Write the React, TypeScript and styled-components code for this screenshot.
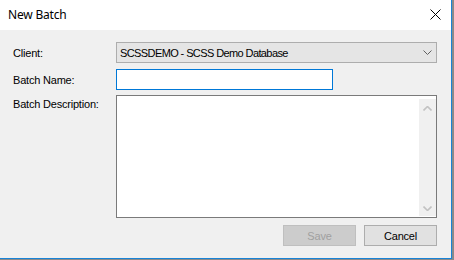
import React from "react";
import styled, { createGlobalStyle } from "styled-components";

const Global = createGlobalStyle`
  html, body { margin: 0; padding: 0; }
  body {
    width: 454px;
    height: 260px;
    overflow: hidden;
    background: #8a8a8a;
    font-family: "Liberation Sans", Arial, sans-serif;
  }
`;

const Window = styled.div`
  width: 451px;
  height: 258px;
  border-right: 1px solid #1883d7;
  border-bottom: 1px solid #1883d7;
  display: flex;
  flex-direction: column;
  background: #f0f0f0;
`;

const TitleBar = styled.div`
  height: 30px;
  flex: none;
  background: #ffffff;
  display: flex;
  align-items: center;
  justify-content: space-between;
  padding: 0 10px 0 8px;
`;

const Title = styled.span`
  font-family: "Noto Sans", "Liberation Sans", sans-serif;
  font-size: 12px;
  letter-spacing: -0.2px;
  color: #000;
  margin-top: -1px;
`;

const CloseButton = styled.span`
  display: flex;
  width: 11px;
  height: 11px;
  margin-top: -2px;
`;

const Body = styled.div`
  flex: 1;
  display: flex;
  flex-direction: column;
  padding: 12px 14px 0 13px;
  letter-spacing: -0.2px;
`;

const Form = styled.div`
  display: grid;
  grid-template-columns: 103px 321px;
  row-gap: 6px;
`;

const Label = styled.label<{ $top?: boolean }>`
  font-size: 11px;
  color: #000;
  display: flex;
  align-items: ${(p) => (p.$top ? "flex-start" : "center")};
  padding-top: ${(p) => (p.$top ? "3px" : "0")};
  margin-top: ${(p) => (p.$top ? "-1px" : "0")};
`;

const Combo = styled.div`
  box-sizing: border-box;
  height: 21px;
  border: 1px solid #adadad;
  background: #e5e5e5;
  display: flex;
  align-items: center;
  justify-content: space-between;
  padding: 0 4px 0 3px;
  font-size: 11px;
  letter-spacing: -0.6px;
  color: #000;
`;

const TextBox = styled.input`
  box-sizing: border-box;
  width: 217px;
  height: 21px;
  border: 1px solid #0078d7;
  background: #fff;
  outline: none;
  margin: 0;
  padding: 0 3px;
  font-size: 11px;
  font-family: inherit;
`;

const MemoBox = styled.div`
  box-sizing: border-box;
  height: 123px;
  margin-top: -1px;
  border: 1px solid #7a7a7a;
  background: #fff;
  display: flex;
`;

const Memo = styled.textarea`
  flex: 1;
  border: none;
  outline: none;
  resize: none;
  margin: 0;
  padding: 2px 3px;
  font-size: 11px;
  font-family: inherit;
  background: transparent;
`;

const ScrollBar = styled.div`
  width: 17px;
  margin: 3px 0 1px;
  background: #f0f0f0;
  display: flex;
  flex-direction: column;
  justify-content: space-between;
  align-items: center;
  padding: 7px 0 5px;
`;

const Buttons = styled.div`
  display: flex;
  justify-content: flex-end;
  gap: 8px;
  margin-top: 7px;
`;

const Button = styled.button<{ $disabled?: boolean }>`
  box-sizing: border-box;
  width: 73px;
  height: 21px;
  margin: 0;
  padding: 0;
  font-size: 11px;
  font-family: inherit;
  letter-spacing: -0.2px;
  border: 1px solid ${(p) => (p.$disabled ? "#bfbfbf" : "#adadad")};
  background: ${(p) => (p.$disabled ? "#cccccc" : "#e1e1e1")};
  color: ${(p) => (p.$disabled ? "#a0a0a0" : "#000")};
`;

const Chevron = ({ up, color, w = 9, sw = 1 }: { up?: boolean; color: string; w?: number; sw?: number }) => (
  <svg width={w} height={5} viewBox={`0 0 ${w} 5`} style={{ display: "block" }}>
    <polyline
      points={
        up
          ? `0.5,4.5 ${w / 2},0.5 ${w - 0.5},4.5`
          : `0.5,0.5 ${w / 2},4.5 ${w - 0.5},0.5`
      }
      fill="none"
      stroke={color}
      strokeWidth={sw}
    />
  </svg>
);

export default function App() {
  return (
    <>
      <Global />
      <Window>
        <TitleBar>
          <Title>New Batch</Title>
          <CloseButton>
            <svg width="11" height="11" viewBox="0 0 11 11">
              <path d="M0.5 0.5 L10.5 10.5 M10.5 0.5 L0.5 10.5" stroke="#000" strokeWidth="1" fill="none" />
            </svg>
          </CloseButton>
        </TitleBar>
        <Body>
          <Form>
            <Label>Client:</Label>
            <Combo>
              <span>SCSSDEMO - SCSS Demo Database</span>
              <Chevron color="#606060" />
            </Combo>
            <Label>Batch Name:</Label>
            <TextBox />
            <Label $top>Batch Description:</Label>
            <MemoBox>
              <Memo />
              <ScrollBar>
                <Chevron up color="#c2c2c2" w={9} sw={1.6} />
                <Chevron color="#c2c2c2" w={9} sw={1.6} />
              </ScrollBar>
            </MemoBox>
          </Form>
          <Buttons>
            <Button $disabled>Save</Button>
            <Button>Cancel</Button>
          </Buttons>
        </Body>
      </Window>
    </>
  );
}
